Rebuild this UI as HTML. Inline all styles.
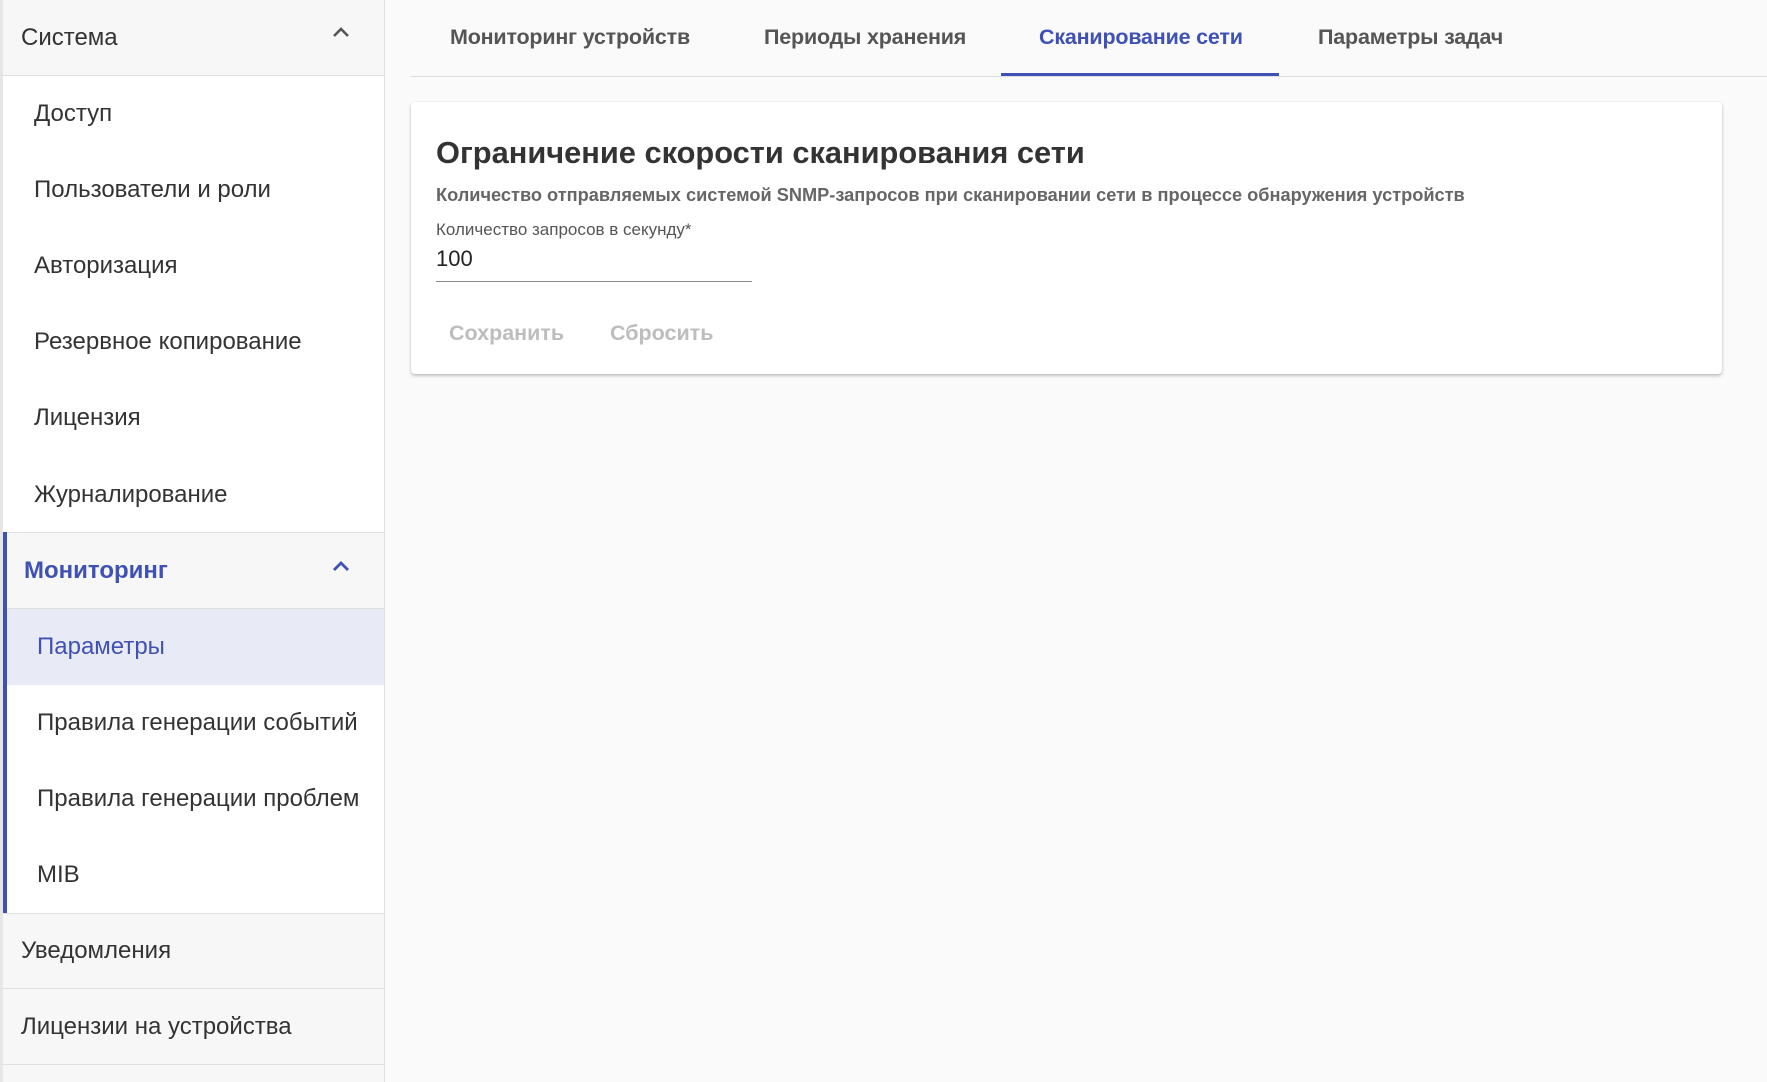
<!DOCTYPE html>
<html><head><meta charset="utf-8"><style>
*{margin:0;padding:0;box-sizing:border-box}
body{width:1767px;height:1082px;background:#fafafa;font-family:"Liberation Sans","DejaVu Sans",sans-serif;position:relative;overflow:hidden;color:#333}
.sb{position:absolute;left:0;top:0;width:385px;height:1082px;border-left:3px solid #e6e6e6;border-right:1px solid #e0e0e0;background:#f7f7f7}
.row{position:absolute;left:0;width:381px;height:76px;display:flex;align-items:center;font-size:24px;color:#333}
.hd{background:#f7f7f7;border-bottom:1px solid #e0e0e0;padding-left:18px}
.it{padding-left:31px;background:#fff}
.sub{padding-left:34px;background:#fff}
.chev{position:absolute;left:328px;width:20px;height:12px}
.tab{position:absolute;top:25px;font-size:21.5px;font-weight:bold;color:#555;letter-spacing:-0.2px}
</style></head><body>
<div class="sb">
<div class="row hd" style="top:0">Система<svg class="chev" style="top:26px" viewBox="0 0 20 12"><path d="M3 10 L10 3 L17 10" fill="none" stroke="#555" stroke-width="2.6"/></svg></div>
<div class="row it" style="top:76px">Доступ</div>
<div class="row it" style="top:152px">Пользователи и роли</div>
<div class="row it" style="top:228px">Авторизация</div>
<div class="row it" style="top:304px">Резервное копирование</div>
<div class="row it" style="top:380px">Лицензия</div>
<div class="row it" style="top:456px;height:77px">Журналирование</div>
<div style="position:absolute;left:0;top:532px;width:4px;height:381px;background:#3f51b5;z-index:2"></div>
<div class="row hd" style="top:532px;height:77px;border-top:1px solid #e0e0e0;padding-left:21px;color:#3f51b5;font-weight:bold">Мониторинг<svg class="chev" style="top:27px" viewBox="0 0 20 12"><path d="M3 10 L10 3 L17 10" fill="none" stroke="#3f51b5" stroke-width="2.8"/></svg></div>
<div class="row sub" style="top:609px;background:#e8eaf6;color:#3f51b5">Параметры</div>
<div class="row sub" style="top:685px">Правила генерации событий</div>
<div class="row sub" style="top:761px">Правила генерации проблем</div>
<div class="row sub" style="top:837px">MIB</div>
<div class="row hd" style="top:913px;border-top:1px solid #e0e0e0">Уведомления</div>
<div class="row hd" style="top:989px">Лицензии на устройства</div>
</div>
<div style="position:absolute;left:411px;top:76px;width:1356px;height:1px;background:#dcdcdc"></div>
<div style="position:absolute;left:1001px;top:73px;width:278px;height:3px;background:#3f51b5"></div>
<div class="tab" style="left:450px">Мониторинг устройств</div>
<div class="tab" style="left:764px">Периоды хранения</div>
<div class="tab" style="left:1039px;color:#3f51b5">Сканирование сети</div>
<div class="tab" style="left:1318px">Параметры задач</div>
<div style="position:absolute;left:411px;top:102px;width:1311px;height:272px;background:#fff;border-radius:4px;box-shadow:0 2px 3px rgba(0,0,0,.22),0 0 2px rgba(0,0,0,.08)">
<div style="position:absolute;left:25px;top:33px;font-size:30.8px;font-weight:bold;color:#333">Ограничение скорости сканирования сети</div>
<div style="position:absolute;left:25px;top:83px;font-size:18.2px;font-weight:bold;color:#666">Количество отправляемых системой SNMP-запросов при сканировании сети в процессе обнаружения устройств</div>
<div style="position:absolute;left:25px;top:118px;font-size:17px;color:#555">Количество запросов в секунду*</div>
<div style="position:absolute;left:25px;top:144px;font-size:22px;color:#222">100</div>
<div style="position:absolute;left:25px;top:179px;width:316px;height:1px;background:#8a8a8a"></div>
<div style="position:absolute;left:38px;top:219px;font-size:21.5px;font-weight:bold;color:#bdbdbd">Сохранить</div>
<div style="position:absolute;left:199px;top:219px;font-size:21.5px;font-weight:bold;color:#bdbdbd">Сбросить</div>
</div>
</body></html>
